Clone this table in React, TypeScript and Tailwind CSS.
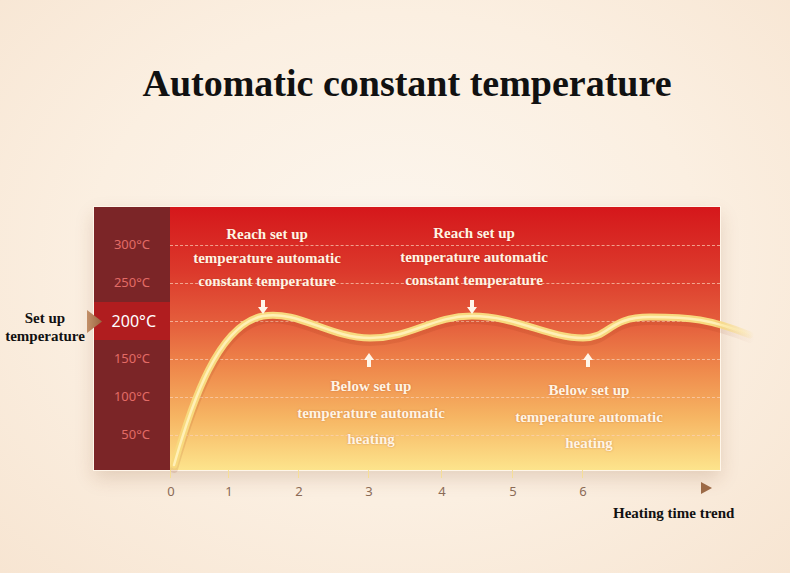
import React from 'react';

const SERIF = "font-['Liberation_Serif','Times_New_Roman',serif]";
const SANS = "font-['Noto_Sans','Open_Sans',sans-serif]";

const Y_LABELS = ['300°C', '250°C', '200°C', '150°C', '100°C', '50°C'];
const GRID_Y = [38, 76, 114, 152, 190, 228];
const X_TICKS = [
  { label: '0', x: 171 },
  { label: '1', x: 229 },
  { label: '2', x: 299 },
  { label: '3', x: 369 },
  { label: '4', x: 442 },
  { label: '5', x: 513 },
  { label: '6', x: 583 },
];

const CURVE =
  'M4,258 C22,195 48,118 93,109 C128,103 160,131 200,131 C242,131 262,109 302,109 C346,109 378,131 413,131 C440,131 438,110 480,110 C520,110 540,112 580,128';

const Arrow: React.FC<{ x: number; y: number; up?: boolean }> = ({ x, y, up }) => (
  <g transform={`translate(${x - 5},${y})${up ? ' translate(0,14) scale(1,-1)' : ''}`}>
    <polygon points="3,0 7,0 7,7 10,7 5,14 0,7 3,7" fill="#fff6ea" />
  </g>
);

const Note: React.FC<{ x: number; top: number; lh: string; lines: string[] }> = ({ x, top, lh, lines }) => (
  <div
    className={`absolute -translate-x-1/2 flex flex-col items-center whitespace-nowrap text-[15px] font-bold text-[#fff4e4] ${SERIF} ${lh} [text-shadow:0_0_2px_rgba(150,40,10,0.35)]`}
    style={{ left: x, top }}
  >
    {lines.map((l) => (
      <span key={l}>{l}</span>
    ))}
  </div>
);

export default function App() {
  return (
    <div className="w-[790px] h-[573px] overflow-hidden bg-[radial-gradient(ellipse_at_50%_45%,#fcf6ee_0%,#fbefe1_55%,#f7e5d2_100%)]">
      {/* title */}
      <div className="pt-[61px] pl-[24px] flex justify-center">
        <h1 className={`text-[38px] leading-[44px] font-bold text-[#111] ${SERIF}`}>Automatic constant temperature</h1>
      </div>

      {/* chart row */}
      <div className="mt-[102px] flex h-[263px]">
        <div className="w-[94px] flex items-center justify-center pr-[4px] pb-[23px]">
          <div className={`flex flex-col items-center text-[15px] leading-[18px] font-bold text-[#111] ${SERIF}`}>
            <span>Set up</span>
            <span>temperature</span>
          </div>
        </div>

        <div className="relative flex w-[626px] h-[263px] shadow-[0_8px_18px_rgba(120,60,20,0.18)] outline outline-1 outline-[#fff6ea]">
          {/* y axis column */}
          <div className={`w-[76px] bg-[#7b2527] pt-[19px] flex flex-col ${SANS}`}>
            {Y_LABELS.map((l) =>
              l === '200°C' ? (
                <div key={l} className="h-[38px] bg-[#b01d1f] flex items-center justify-end pr-[14px] text-[16px] text-white">
                  {l}
                </div>
              ) : (
                <div key={l} className="h-[38px] flex items-center justify-end pr-[20px] text-[13px] text-[#e36b66]">
                  {l}
                </div>
              ),
            )}
          </div>

          {/* plot */}
          <div className="relative flex-1 bg-[linear-gradient(180deg,#d5171b_0%,#dc3a2c_25%,#e5603d_45%,#ef8a4c_62%,#f6b563_80%,#fde48c_100%)]">
            {GRID_Y.map((y) => (
              <div key={y} className="absolute left-0 right-0 border-t border-dashed border-[#fbd2b8]/70" style={{ top: y }} />
            ))}

            <svg className="absolute left-0 top-0 overflow-visible" width={550} height={263}>
              <defs>
                <linearGradient id="fade" gradientUnits="userSpaceOnUse" x1="0" y1="0" x2="585" y2="0">
                  <stop offset="0.93" stopColor="#f8d97e" stopOpacity="1" />
                  <stop offset="1" stopColor="#f8d97e" stopOpacity="0" />
                </linearGradient>
                <linearGradient id="fadeIn" gradientUnits="userSpaceOnUse" x1="0" y1="0" x2="585" y2="0">
                  <stop offset="0.93" stopColor="#fff0b6" stopOpacity="1" />
                  <stop offset="1" stopColor="#fff0b6" stopOpacity="0" />
                </linearGradient>
                <linearGradient id="shade" gradientUnits="userSpaceOnUse" x1="0" y1="0" x2="585" y2="0">
                  <stop offset="0.92" stopColor="#8c280a" stopOpacity="0.12" />
                  <stop offset="1" stopColor="#8c280a" stopOpacity="0" />
                </linearGradient>
              </defs>
              <path d={CURVE} transform="translate(0,4)" fill="none" stroke="url(#shade)" strokeWidth={8} strokeLinecap="round" />
              <path d={CURVE} fill="none" stroke="url(#fade)" strokeWidth={7} strokeLinecap="round" />
              <path d={CURVE} fill="none" stroke="url(#fadeIn)" strokeWidth={2.5} strokeLinecap="round" />
              <Arrow x={93} y={93} />
              <Arrow x={302} y={93} />
              <Arrow x={199} y={146} up />
              <Arrow x={418} y={146} up />
            </svg>

            <Note x={97} top={16} lh="leading-[23.5px]" lines={['Reach set up', 'temperature automatic', 'constant temperature']} />
            <Note x={304} top={15} lh="leading-[23.5px]" lines={['Reach set up', 'temperature automatic', 'constant temperature']} />
            <Note x={201} top={166} lh="leading-[26.5px]" lines={['Below set up', 'temperature automatic', 'heating']} />
            <Note x={419} top={170} lh="leading-[26.5px]" lines={['Below set up', 'temperature automatic', 'heating']} />
          </div>

          {/* set-up pointer */}
          <svg className="absolute left-[-7px] top-[103px]" width={15} height={23}>
            <defs>
              <linearGradient id="tri" x1="0" y1="0" x2="1" y2="0">
                <stop offset="0" stopColor="#c39068" />
                <stop offset="1" stopColor="#9a6440" />
              </linearGradient>
            </defs>
            <polygon points="0,0 15,11.5 0,23" fill="url(#tri)" />
          </svg>
        </div>
      </div>

      {/* x axis */}
      <div className={`relative h-[103px] ${SANS}`}>
        {X_TICKS.map((t) => (
          <React.Fragment key={t.label}>
            <div className="absolute top-0 w-px h-[8px] bg-[#f6de96]" style={{ left: t.x - 1 }} />
            <div className="absolute top-[12px] -translate-x-1/2 text-[13px] leading-[18px] text-[#8b6b56]" style={{ left: t.x }}>
              {t.label}
            </div>
          </React.Fragment>
        ))}
        <svg className="absolute left-[701px] top-[12px]" width={11} height={12}>
          <polygon points="0,0 11,6 0,12" fill="#9c6a47" />
        </svg>
        <div className={`absolute left-[613px] top-[34px] text-[15px] leading-[18px] font-bold text-[#111] whitespace-nowrap ${SERIF}`}>
          Heating time trend
        </div>
      </div>
    </div>
  );
}
